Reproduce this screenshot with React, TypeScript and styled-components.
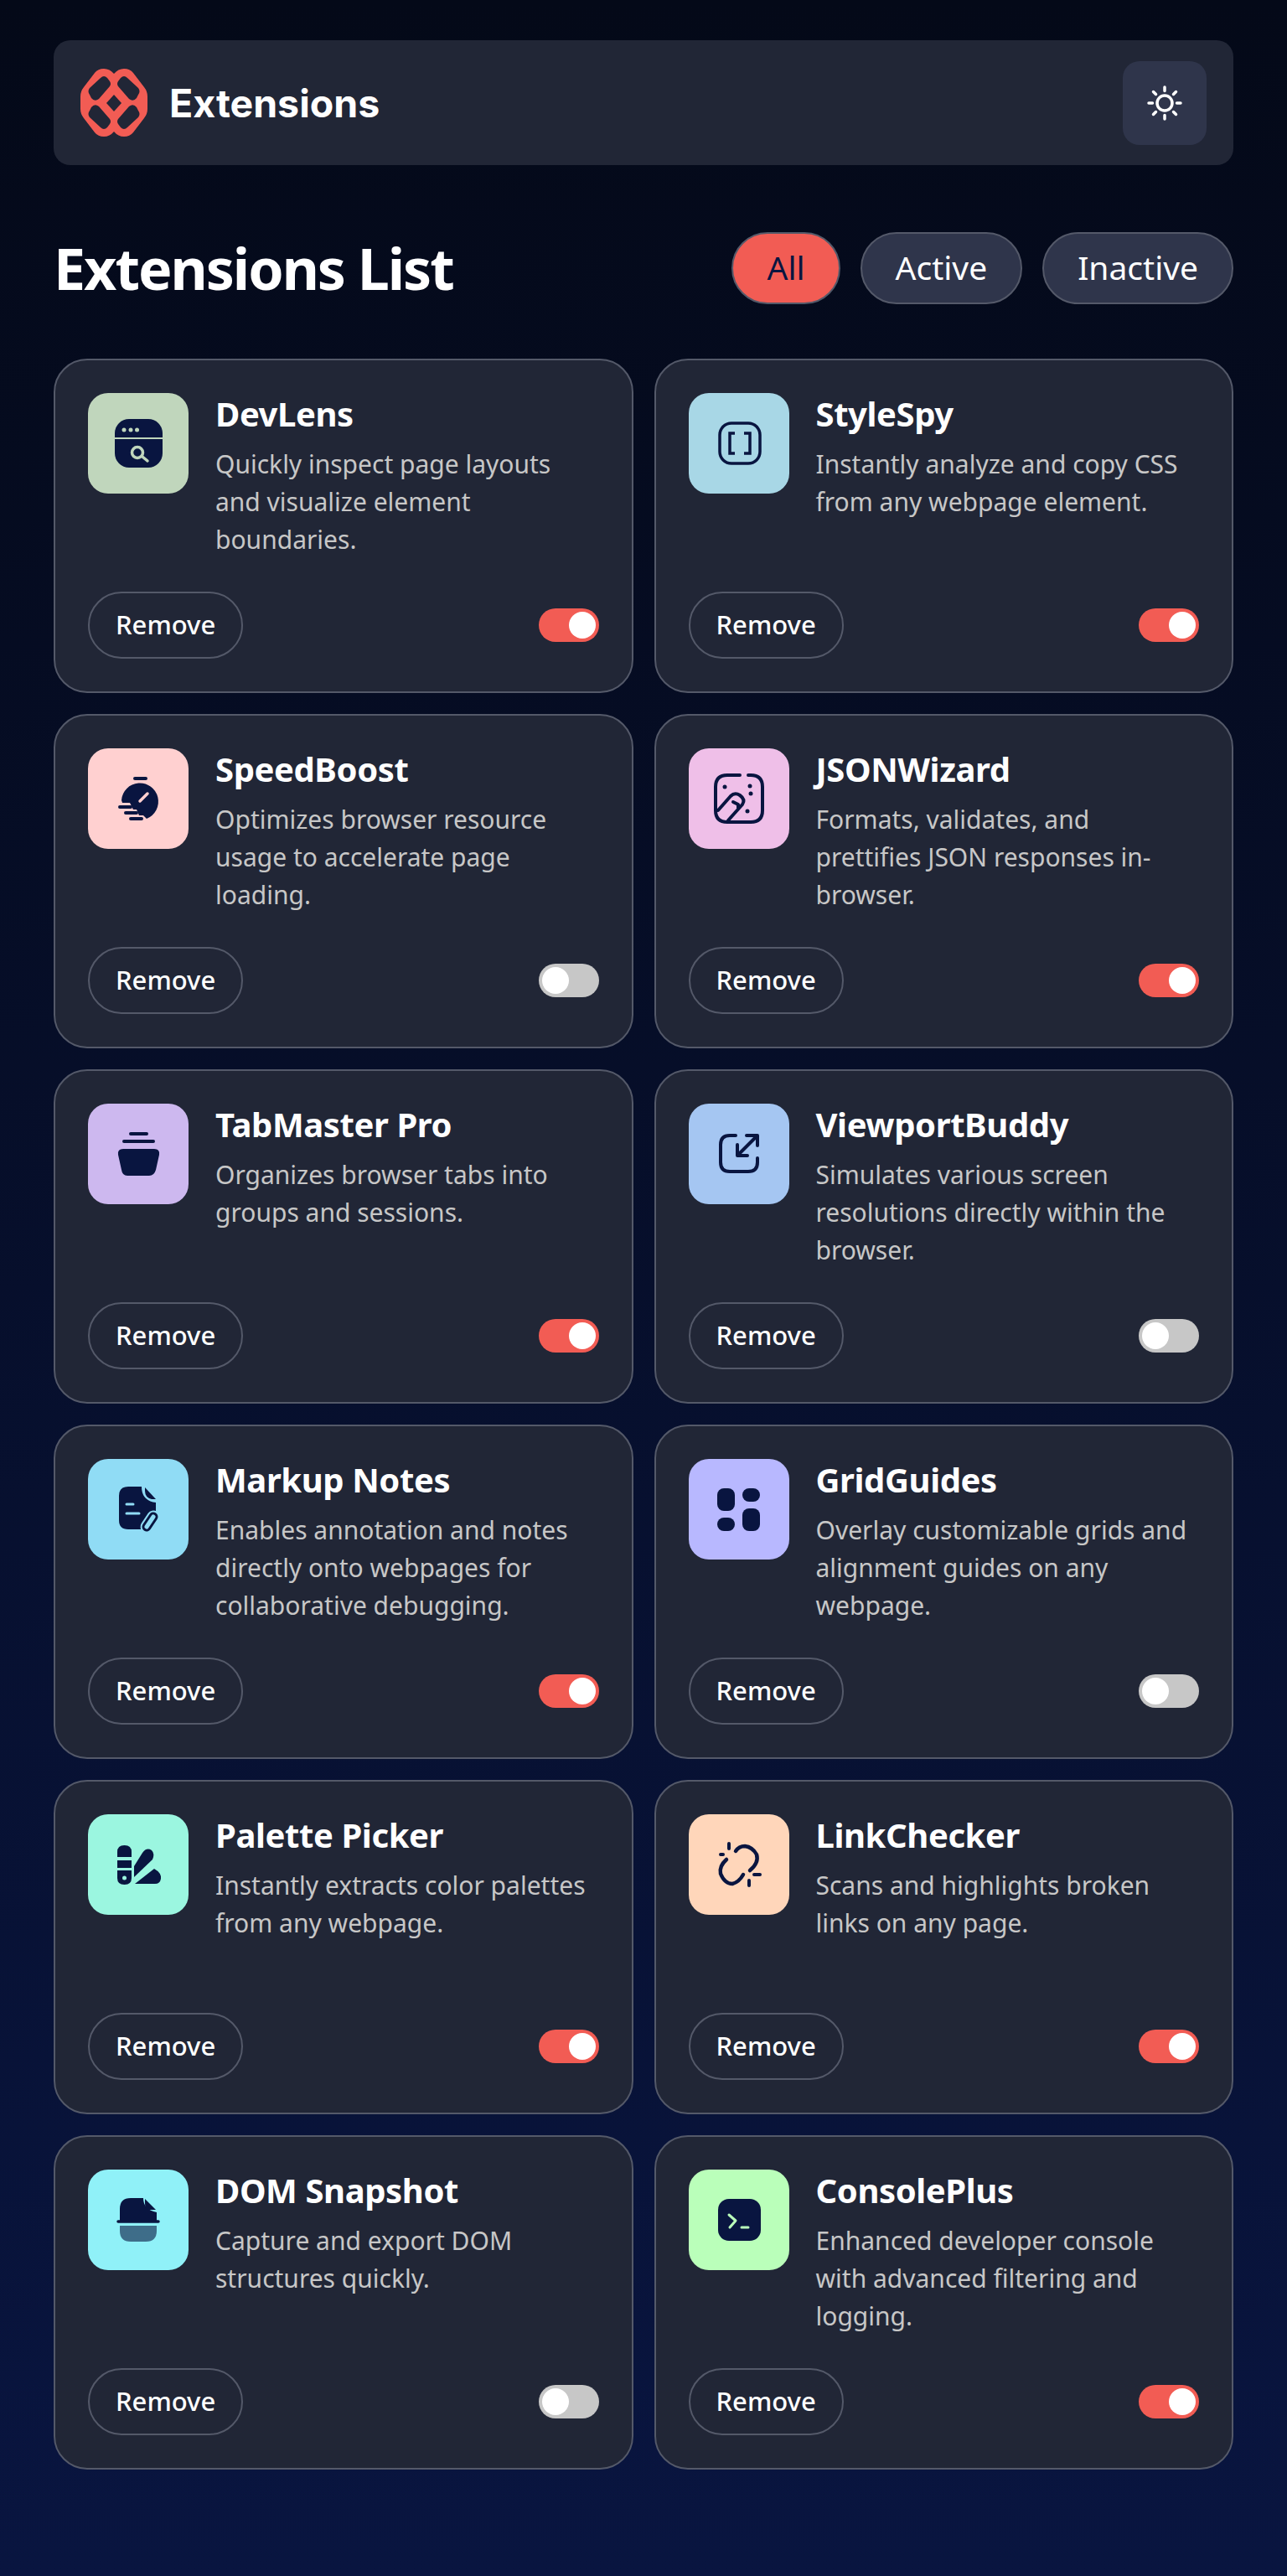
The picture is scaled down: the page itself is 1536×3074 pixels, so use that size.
import { useState } from "react";
import styled, { createGlobalStyle } from "styled-components";

const GlobalStyle = createGlobalStyle`
    * { box-sizing: border-box; }
    html, body { margin: 0; padding: 0; }
    body {
        min-height: 3074px;
        background: linear-gradient(180deg, #040918 0%, #091540 100%);
        font-family: "Noto Sans", sans-serif;
        color: white;
    }
`;

const Page = styled.main`
    padding: 48px 64px 0;
`;

const Header = styled.header`
    display: flex;
    align-items: center;
    justify-content: space-between;
    height: 149px;
    padding: 0 32px;
    background-color: #212636;
    border-radius: 20px;
`;

const Brand = styled.div`
    display: flex;
    align-items: center;
    gap: 26px;
`;

const BrandName = styled.span`
    font-family: Inter, sans-serif;
    font-size: 46.5px;
    font-weight: 700;
`;

const ThemeButton = styled.button`
    display: flex;
    align-items: center;
    justify-content: center;
    width: 100px;
    height: 100px;
    padding: 0;
    border: none;
    border-radius: 20px;
    background-color: #2f354b;
    color: white;
`;

const TitleRow = styled.div`
    display: flex;
    align-items: center;
    justify-content: space-between;
    margin: 80px 0 65px;
`;

const Title = styled.h1`
    margin: 0;
    font-size: 68px;
    line-height: 86px;
    font-weight: 700;
    letter-spacing: -2px;
`;

const Filters = styled.div`
    display: flex;
    gap: 24px;
`;

const FilterButton = styled.button<{ $active: boolean }>`
    height: 86px;
    padding: 0 40px 3px;
    border: 2px solid #545969;
    border-radius: 999px;
    background-color: ${(p) => (p.$active ? "#f25c54" : "#2f354b")};
    color: ${(p) => (p.$active ? "#091540" : "white")};
    font-family: "Noto Sans", sans-serif;
    font-size: 39px;
`;

const Grid = styled.section`
    display: grid;
    grid-template-columns: 1fr 1fr;
    gap: 25px;
`;

const Card = styled.article`
    display: flex;
    flex-direction: column;
    justify-content: space-between;
    height: 399px;
    padding: 39px;
    background-color: #212636;
    border: 2px solid #545969;
    border-radius: 40px;
`;

const CardTop = styled.div`
    display: flex;
    gap: 32px;
`;

const IconTile = styled.div<{ $bg: string }>`
    flex: none;
    width: 120px;
    height: 120px;
    border-radius: 24px;
    background-color: ${(p) => p.$bg};
    svg { display: block; }
`;

const CardName = styled.h2`
    margin: 0 0 12px;
    font-size: 40px;
    line-height: 50px;
    font-weight: 700;
    letter-spacing: -0.4px;
`;

const CardText = styled.p`
    margin: 0;
    font-size: 30px;
    line-height: 45px;
    color: #c7c7c7;
`;

const CardBottom = styled.div`
    display: flex;
    align-items: center;
    justify-content: space-between;
`;

const RemoveButton = styled.button`
    height: 80px;
    padding: 0 31px 3px;
    border: 2px solid #545969;
    border-radius: 999px;
    background: transparent;
    color: white;
    font-family: "Noto Sans", sans-serif;
    font-size: 31px;
    font-weight: 500;
`;

const Toggle = styled.button<{ $on: boolean }>`
    display: flex;
    justify-content: ${(p) => (p.$on ? "flex-end" : "flex-start")};
    align-items: center;
    width: 72px;
    height: 40px;
    padding: 4px;
    border: none;
    border-radius: 999px;
    background-color: ${(p) => (p.$on ? "#f25c54" : "#c7c7c7")};
`;

const Knob = styled.span`
    width: 32px;
    height: 32px;
    border-radius: 50%;
    background-color: white;
`;

const NAVY = "#091540";

type IconProps = { cut: string };

const Svg = ({ children }: { children: React.ReactNode }) => (
    <svg width="120" height="120" viewBox="0 0 120 120" fill="none" strokeLinecap="round" strokeLinejoin="round">
        {children}
    </svg>
);

const DevLensIcon = ({ cut }: IconProps) => (
    <Svg>
        <rect x="32" y="31" width="57" height="58" rx="17" fill={NAVY} />
        <path d="M32 54H89" stroke={cut} strokeWidth="2" strokeLinecap="butt" />
        <circle cx="43" cy="44" r="2.5" fill={cut} />
        <circle cx="51" cy="44" r="2.5" fill={cut} />
        <circle cx="58.5" cy="44" r="2.5" fill={cut} />
        <circle cx="59" cy="71" r="6.5" stroke={cut} strokeWidth="3.5" />
        <path d="M65 76L71 81" stroke={cut} strokeWidth="3.5" />
    </Svg>
);

const StyleSpyIcon = () => (
    <Svg>
        <rect x="37" y="36" width="48" height="48" rx="14" stroke={NAVY} strokeWidth="3.5" />
        <path d="M55 48H49V72H55M66 48H73V72H66" stroke={NAVY} strokeWidth="3.5" strokeLinecap="butt" strokeLinejoin="miter" />
    </Svg>
);

const SpeedBoostIcon = ({ cut }: IconProps) => (
    <Svg>
        <path d="M56 36H69" stroke={NAVY} strokeWidth="4" />
        <path d="M40 62A22 22 0 1 1 70 84L66 80H61L58 73H54L50 65H41Z" fill={NAVY} />
        <path d="M62 63L71 54" stroke={cut} strokeWidth="3.5" />
        <path d="M38 70H51M45 77H58M51 84H64" stroke={NAVY} strokeWidth="4" />
    </Svg>
);

const JsonWizardIcon = () => (
    <Svg>
        <path d="M61 32H46Q32 32 32 46V74Q32 88 46 88H74Q88 88 88 74V46Q88 32 74 32H71" stroke={NAVY} strokeWidth="4" />
        <path d="M35 74L50 57Q55 52 61 56Q68 61 64 67L47 86M53 64L59 67V71" stroke={NAVY} strokeWidth="4" />
        <circle cx="43" cy="46" r="2.5" fill={NAVY} />
        <circle cx="73" cy="45" r="2.5" fill={NAVY} />
        <circle cx="74" cy="54" r="2.5" fill={NAVY} />
        <circle cx="70" cy="75" r="2.5" fill={NAVY} />
    </Svg>
);

const TabMasterIcon = () => (
    <Svg>
        <path d="M51 36H70M43 45H78" stroke={NAVY} strokeWidth="4" />
        <path d="M42 54H79Q86 54 85 61L81 79Q79 86 73 86H47Q41 86 40 79L36 61Q35 54 42 54Z" fill={NAVY} />
    </Svg>
);

const ViewportIcon = () => (
    <Svg>
        <path d="M56 38H49Q38 38 38 49V70Q38 81 49 81H71Q82 81 82 70V65" stroke={NAVY} strokeWidth="4" />
        <path d="M59 61L81 39M69 38H82V50M58 49V62H70" stroke={NAVY} strokeWidth="4" />
    </Svg>
);

const MarkupIcon = ({ cut }: IconProps) => (
    <Svg>
        <path d="M48 33H64Q64 50 81 52V73Q81 84 70 84H48Q37 84 37 73V44Q37 33 48 33Z" fill={NAVY} />
        <path d="M68 34L81 48H76Q68 46 68 38Z" fill={NAVY} />
        <path d="M46 54H54M46 65H61" stroke={cut} strokeWidth="3" />
        <path d="M70 81L78 69" stroke={cut} strokeWidth="15" />
        <path d="M70 81L78 69" stroke={NAVY} strokeWidth="11" />
        <path d="M70 81L78 69" stroke={cut} strokeWidth="5" />
    </Svg>
);

const GridIcon = () => (
    <Svg>
        <rect x="34" y="35" width="21" height="27" rx="8" fill={NAVY} />
        <rect x="64" y="35" width="21" height="16" rx="8" fill={NAVY} />
        <rect x="34" y="70" width="21" height="16" rx="8" fill={NAVY} />
        <rect x="64" y="59" width="21" height="27" rx="8" fill={NAVY} />
    </Svg>
);

const PaletteIcon = ({ cut }: IconProps) => (
    <Svg>
        <path d="M35 51V45Q35 37 43.5 37Q52 37 52 45V51Z" fill={NAVY} />
        <rect x="35" y="55" width="17" height="9" fill={NAVY} />
        <path d="M35 67H52V76Q52 84 43.5 84Q35 84 35 76Z" fill={NAVY} />
        <circle cx="43.5" cy="76" r="2.5" fill={cut} />
        <path d="M55 75V62L65 46Q70 39 76 43Q80 47 77 54Z" fill={NAVY} />
        <path d="M56 83L79 65Q88 70 87 77Q86 83 80 83Z" fill={NAVY} />
    </Svg>
);

const LinkIcon = () => (
    <Svg>
        <path d="M56 44Q60 38 67 38Q76 39 81 48Q84 58 73 67" stroke={NAVY} strokeWidth="4.5" />
        <path d="M45 54Q36 62 38 71Q43 83 52 83Q60 81 65 72" stroke={NAVY} strokeWidth="4.5" />
        <path d="M48 35V41M38 48H41M78 72H85M72 79V85" stroke={NAVY} strokeWidth="4" />
    </Svg>
);

const SnapshotIcon = () => (
    <Svg>
        <path d="M38 61V47Q38 34 51 34H66Q66 48 82 51V61Z" fill={NAVY} />
        <path d="M68 35L81 48H71Q68 46 68 40Z" fill={NAVY} />
        <path d="M36 62H84" stroke={NAVY} strokeWidth="3.5" />
        <path d="M38 67H82V73Q82 86 69 86H51Q38 86 38 73Z" fill={NAVY} fillOpacity="0.6" />
    </Svg>
);

const ConsoleIcon = ({ cut }: IconProps) => (
    <Svg>
        <rect x="35" y="35" width="51" height="50" rx="13" fill={NAVY} />
        <path d="M48 54L56 61L49 69" stroke={cut} strokeWidth="3" />
        <path d="M63 69H71" stroke={cut} strokeWidth="3" />
    </Svg>
);

const HOLE = "M24 11Q28 7 32 11L35 15Q37 18 35 21L22 36Q17 40 13 35L11 31Q8 27 11 23Z";

const Logo = () => (
    <svg width="80" height="81" viewBox="0 0 80 81">
        <path
            fill="#f25c54"
            d="M28 0Q35 0 40 6Q45 0 52 0Q59 0 63 5L76 22Q80 27 80 33V48Q80 54 76 59L63 76Q59 81 52 81Q45 81 40 75Q35 81 28 81Q21 81 17 76L4 59Q0 54 0 48V33Q0 27 4 22L17 5Q21 0 28 0Z"
        />
        <g fill="#212636">
            <path d={HOLE} />
            <path d={HOLE} transform="translate(80 0) scale(-1 1)" />
            <path d={HOLE} transform="translate(0 81) scale(1 -1)" />
            <path d={HOLE} transform="translate(80 81) scale(-1 -1)" />
            <path d="M40 31L49 41L40 51L31 41Z" />
        </g>
    </svg>
);

const SunIcon = () => (
    <svg width="42" height="42" viewBox="0 0 42 42" fill="none" stroke="currentColor" strokeWidth="3.5" strokeLinecap="round">
        <circle cx="21" cy="21" r="9" />
        <path d="M21 2V6.5M21 35.5V40M2 21H6.5M35.5 21H40M7.5 7.5L10.5 10.5M31.5 31.5L34.5 34.5M7.5 34.5L10.5 31.5M31.5 10.5L34.5 7.5" />
    </svg>
);

const extensions = [
    { name: "DevLens", text: "Quickly inspect page layouts and visualize element boundaries.", bg: "#c0d6bc", Icon: DevLensIcon, on: true },
    { name: "StyleSpy", text: "Instantly analyze and copy CSS from any webpage element.", bg: "#a8d7e6", Icon: StyleSpyIcon, on: true },
    { name: "SpeedBoost", text: "Optimizes browser resource usage to accelerate page loading.", bg: "#ffd0d0", Icon: SpeedBoostIcon, on: false },
    { name: "JSONWizard", text: "Formats, validates, and prettifies JSON responses in-browser.", bg: "#efbfe8", Icon: JsonWizardIcon, on: true },
    { name: "TabMaster Pro", text: "Organizes browser tabs into groups and sessions.", bg: "#cdb8ef", Icon: TabMasterIcon, on: true },
    { name: "ViewportBuddy", text: "Simulates various screen resolutions directly within the browser.", bg: "#a5c6f2", Icon: ViewportIcon, on: false },
    { name: "Markup Notes", text: "Enables annotation and notes directly onto webpages for collaborative debugging.", bg: "#90dcf5", Icon: MarkupIcon, on: true },
    { name: "GridGuides", text: "Overlay customizable grids and alignment guides on any webpage.", bg: "#b8b8ff", Icon: GridIcon, on: false },
    { name: "Palette Picker", text: "Instantly extracts color palettes from any webpage.", bg: "#9bf6e0", Icon: PaletteIcon, on: true },
    { name: "LinkChecker", text: "Scans and highlights broken links on any page.", bg: "#ffd6ba", Icon: LinkIcon, on: true },
    { name: "DOM Snapshot", text: "Capture and export DOM structures quickly.", bg: "#90f1f8", Icon: SnapshotIcon, on: false },
    { name: "ConsolePlus", text: "Enhanced developer console with advanced filtering and logging.", bg: "#baffba", Icon: ConsoleIcon, on: true },
];

const FILTERS = ["All", "Active", "Inactive"];

export default function App() {
    const [filter, setFilter] = useState("All");
    const [items, setItems] = useState(extensions);

    const onToggle = (name: string) => {
        setItems(items.map((item) => (item.name === name ? { ...item, on: !item.on } : item)));
    };

    const visible = items.filter((item) => filter === "All" || item.on === (filter === "Active"));

    return (
        <Page>
            <GlobalStyle />
            <Header>
                <Brand>
                    <Logo />
                    <BrandName>Extensions</BrandName>
                </Brand>
                <ThemeButton aria-label="Toggle theme">
                    <SunIcon />
                </ThemeButton>
            </Header>
            <TitleRow>
                <Title>Extensions List</Title>
                <Filters>
                    {FILTERS.map((label) => (
                        <FilterButton key={label} $active={filter === label} onClick={() => setFilter(label)}>
                            {label}
                        </FilterButton>
                    ))}
                </Filters>
            </TitleRow>
            <Grid>
                {visible.map(({ name, text, bg, Icon, on }) => (
                    <Card key={name}>
                        <CardTop>
                            <IconTile $bg={bg}>
                                <Icon cut={bg} />
                            </IconTile>
                            <div>
                                <CardName>{name}</CardName>
                                <CardText>{text}</CardText>
                            </div>
                        </CardTop>
                        <CardBottom>
                            <RemoveButton>Remove</RemoveButton>
                            <Toggle $on={on} onClick={() => onToggle(name)} aria-label={`Toggle ${name}`}>
                                <Knob />
                            </Toggle>
                        </CardBottom>
                    </Card>
                ))}
            </Grid>
        </Page>
    );
}
